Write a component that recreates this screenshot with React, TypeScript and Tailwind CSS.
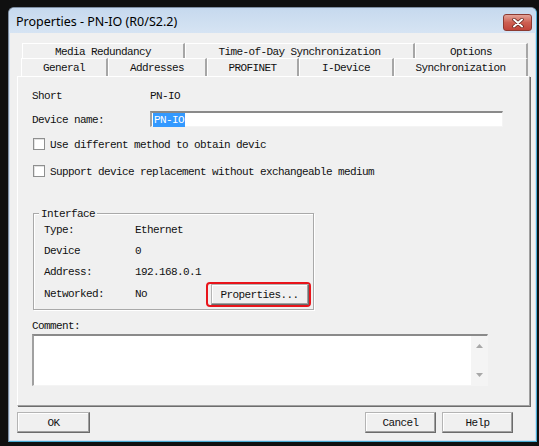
import React from 'react'

const mono = "font-['Liberation_Mono','DejaVu_Sans_Mono',monospace] text-[11px] tracking-[-0.6px] text-[#111111] leading-none whitespace-nowrap pt-[2px]"

const backTabs = [
  { label: 'Media Redundancy', w: 'w-[163px]' },
  { label: 'Time-of-Day Synchronization', w: 'w-[230px]' },
  { label: 'Options', w: 'w-[113px]' },
]

const frontTabs = [
  { label: 'General', w: 'w-[87px]' },
  { label: 'Addresses', w: 'w-[99px]' },
  { label: 'PROFINET', w: 'w-[92px]' },
  { label: 'I-Device', w: 'w-[95px]' },
  { label: 'Synchronization', w: 'w-[134px]' },
]

const iface = [
  { label: 'Type:', value: 'Ethernet' },
  { label: 'Device', value: '0' },
  { label: 'Address:', value: '192.168.0.1' },
]

function Tab({ label, w }: { label: string; w: string }) {
  return (
    <div
      className={`${w} h-full flex items-center justify-center border-t border-l border-t-white border-l-white border-r-2 border-r-[#a6a6a6] ${mono}`}
    >
      {label}
    </div>
  )
}

function Checkbox() {
  return (
    <div className="w-[12px] h-[12px] bg-white border border-[#8e8f8f] shadow-[inset_1px_1px_0_#e2e2e2]" />
  )
}

function WinButton({ label, w }: { label: string; w: string }) {
  return (
    <div
      className={`${w} h-[21px] flex items-center justify-center bg-[#f0f0f0] border border-[#b4b4b4] border-r-[#6b6b6b] border-b-[#6b6b6b] shadow-[inset_-1px_-1px_0_#a0a0a0,inset_1px_1px_0_#ffffff] ${mono}`}
    >
      {label}
    </div>
  )
}

export default function App() {
  return (
    <div className="w-[539px] h-[446px] bg-[#101010] pt-[7px] pl-[8px] overflow-hidden">
      <div className="w-[529px] h-[435px] flex flex-col rounded-t-[6px] border border-[#7f8fa3] border-r-[#47abd3] border-b-[#47abd3] bg-[#cfdff1]">
        {/* Title bar */}
        <div className="h-[25px] flex items-start justify-between rounded-t-[5px] bg-gradient-to-b from-[#c6d9ee] to-[#d6e4f3]">
          <span className="pl-[7px] pt-[8px] font-['Noto_Sans',sans-serif] text-[12.5px] leading-none text-black">
            Properties - PN-IO (R0/S2.2)
          </span>
          <div className="mt-[6px] mr-[4px] w-[29px] h-[17px] rounded-[3px] border border-[#8c3a31] bg-gradient-to-b from-[#e3a398] via-[#cd5f52] to-[#c1443a] flex items-center justify-center">
            <svg width="12" height="10" viewBox="0 0 12 10">
              <path d="M2 1.5 L10 8.5 M10 1.5 L2 8.5" stroke="#5a1e18" strokeWidth="3.4" strokeLinecap="round" />
              <path d="M2 1.5 L10 8.5 M10 1.5 L2 8.5" stroke="#ffffff" strokeWidth="2" strokeLinecap="round" />
            </svg>
          </div>
        </div>

        {/* Client area */}
        <div className="flex-1 mx-[1px] mb-[1px] bg-[#f0f0f0] flex flex-col">
          {/* Tabs */}
          <div className="mt-[10px] ml-[11px] flex flex-col">
            <div className="h-[15px] ml-[1px] flex">
              {backTabs.map(t => (
                <Tab key={t.label} {...t} />
              ))}
            </div>
            <div className="h-[18px] flex">
              {frontTabs.map(t => (
                <Tab key={t.label} {...t} />
              ))}
            </div>
          </div>

          {/* Panel */}
          <div className="ml-[7px] w-[513px] h-[330px] border border-white border-r-[#a0a0a0] border-b-[#a0a0a0] shadow-[1px_1px_0_#6d6d6d] pl-[14px] pt-[10px] flex flex-col">
            <div className="h-[16px] flex items-center">
              <span className={`w-[118px] ${mono}`}>Short</span>
              <span className={mono}>PN-IO</span>
            </div>

            <div className="mt-[8px] h-[16px] flex items-center">
              <span className={`w-[118px] ${mono}`}>Device name:</span>
              <div className="w-[353px] h-[16px] bg-white border-t-2 border-l-2 border-t-[#8a8a8a] border-l-[#a0a0a0] border-b border-r border-b-[#f4f4f4] border-r-[#f4f4f4] flex items-center pl-[1px]">
                <span className={`bg-[#3399ff] px-[1px] pb-[1px] ${mono} text-white`}>PN-IO</span>
              </div>
            </div>

            <div className="mt-[9px] h-[16px] ml-[1px] flex items-center gap-[5px]">
              <Checkbox />
              <span className={mono}>Use different method to obtain devic</span>
            </div>

            <div className="mt-[11px] h-[16px] ml-[1px] flex items-center gap-[5px]">
              <Checkbox />
              <span className={mono}>Support device replacement without exchangeable medium</span>
            </div>

            {/* Interface group */}
            <div className="relative mt-[34px] ml-[1px] w-[281px] h-[97px] border border-[#a9a9a9] shadow-[inset_1px_1px_0_#ffffff,1px_1px_0_#ffffff] pt-[5px] pl-[10px] flex flex-col">
              <span className={`absolute -top-[7px] left-[5px] px-[2px] bg-[#f0f0f0] ${mono}`}>Interface</span>
              {iface.map(r => (
                <div key={r.label} className="h-[21px] flex items-center">
                  <span className={`w-[91px] ${mono}`}>{r.label}</span>
                  <span className={mono}>{r.value}</span>
                </div>
              ))}
              <div className="h-[22px] flex items-center">
                <span className={`w-[91px] ${mono}`}>Networked:</span>
                <span className={`w-[71px] ${mono}`}>No</span>
                <div className="mt-[3px] w-[105px] h-[25px] rounded-[4px] border-2 border-[#e8141b] flex items-center justify-center pl-[2px]">
                  <WinButton label="Properties..." w="w-[98px]" />
                </div>
              </div>
            </div>

            <div className="mt-[8px] h-[14px] flex items-center">
              <span className={mono}>Comment:</span>
            </div>

            <div className="mt-[2px] w-[456px] h-[52px] bg-white border-t-2 border-l-2 border-t-[#8a8a8a] border-l-[#a0a0a0] border-b border-r border-b-[#f4f4f4] border-r-[#f4f4f4] flex justify-end">
              <div className="w-[16px] h-full bg-[#f4f4f4] flex flex-col items-center justify-between py-[8px]">
                <svg width="7" height="4" viewBox="0 0 7 4">
                  <path d="M0 4 L3.5 0 L7 4 Z" fill="#a8a8a8" />
                </svg>
                <svg width="7" height="4" viewBox="0 0 7 4">
                  <path d="M0 0 L3.5 4 L7 0 Z" fill="#a8a8a8" />
                </svg>
              </div>
            </div>
          </div>

          {/* Buttons */}
          <div className="mt-[6px] flex">
            <div className="ml-[7px]">
              <WinButton label="OK" w="w-[73px]" />
            </div>
            <div className="ml-auto mr-[22px] flex gap-[6px]">
              <WinButton label="Cancel" w="w-[71px]" />
              <WinButton label="Help" w="w-[71px]" />
            </div>
          </div>
        </div>
      </div>
    </div>
  )
}
